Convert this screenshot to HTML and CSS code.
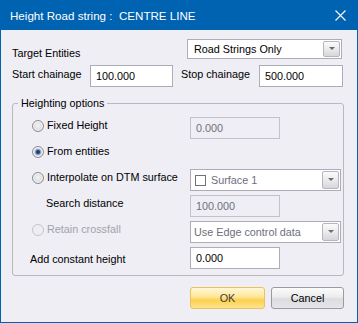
FILE: index.html
```html
<!DOCTYPE html>
<html lang="en">
<head>
  <meta charset="UTF-8" />
  <title>Height Road string</title>
  <link rel="stylesheet" href="styles.css">
</head>
<body>
  <div class="dialog">
    <div class="title-bar">
      <span class="title-text">Height Road string :&nbsp; CENTRE LINE</span>
      <svg class="close-icon" width="11" height="11" viewBox="0 0 11 11">
        <path d="M0.5 0.5 L10.5 10.5 M10.5 0.5 L0.5 10.5" stroke="#ffffff" stroke-width="1.1" fill="none" />
      </svg>
    </div>

    <div class="content">
      <div class="row row-target">
        <span class="label label-target">Target Entities</span>
        <div class="combo combo-target">
          <span class="combo-text">Road Strings Only</span>
          <span class="drop-btn"></span>
        </div>
      </div>

      <div class="row row-chainage">
        <span class="label label-start">Start chainage</span>
        <div class="input input-chain">100.000</div>
        <span class="label label-stop">Stop chainage</span>
        <div class="input input-chain input-stop">500.000</div>
      </div>

      <fieldset class="group">
        <legend>Heighting options</legend>

        <div class="opt-row first">
          <label class="opt-label"><span class="radio"></span>Fixed Height</label>
          <div class="input input-small disabled">0.000</div>
        </div>

        <div class="opt-row">
          <label class="opt-label"><span class="radio checked"></span>From entities</label>
        </div>

        <div class="opt-row">
          <label class="opt-label"><span class="radio"></span>Interpolate on DTM surface</label>
          <div class="combo combo-wide">
            <span class="check-box"></span>
            <span class="combo-text muted">Surface 1</span>
            <span class="drop-btn"></span>
          </div>
        </div>

        <div class="opt-row">
          <span class="opt-label indent">Search distance</span>
          <div class="input input-small disabled">100.000</div>
        </div>

        <div class="opt-row">
          <label class="opt-label greyed"><span class="radio off"></span>Retain crossfall</label>
          <div class="combo combo-wide">
            <span class="combo-text muted tight">Use Edge control data</span>
            <span class="drop-btn"></span>
          </div>
        </div>

        <div class="opt-row last">
          <span class="opt-label plain">Add constant height</span>
          <div class="input input-small">0.000</div>
        </div>
      </fieldset>

      <div class="buttons">
        <button class="btn btn-ok">OK</button>
        <button class="btn btn-cancel">Cancel</button>
      </div>
    </div>
  </div>
</body>
</html>
```

FILE: styles.css
```css
body {
  margin: 0;
  font-family: 'Liberation Sans', Arial, sans-serif;
  font-size: 10.8px;
  color: #000;
  background: #eeeef3;
}

.dialog {
  width: 358px;
  height: 323px;
  box-sizing: border-box;
  border: 1px solid #0063b1;
  border-top: none;
  background: #eeeef4;
}

.title-bar {
  height: 30px;
  margin: 0 -1px;
  padding: 0 12px 0 10px;
  background: #0063b1;
  display: flex;
  align-items: center;
  justify-content: space-between;
}

.title-text {
  color: #ffffff;
  font-size: 11.6px;
  line-height: 14px;
  padding-top: 1px;
}

.close-icon {
  margin-top: 1px;
}

.content {
  padding: 0 13px 0 11px;
}

/* top rows */
.row {
  display: flex;
  align-items: flex-start;
}

.row-target {
  margin-top: 9px;
  height: 20px;
}

.row-chainage {
  margin-top: 6px;
  height: 22px;
}

.label {
  line-height: 13px;
}

.label-target {
  width: 175px;
  padding-top: 8px;
}

.label-start {
  width: 78px;
  padding-top: 3px;
}

.label-stop {
  width: 78px;
  margin-left: 8px;
  padding-top: 3px;
}

.input {
  box-sizing: border-box;
  height: 22px;
  border: 1px solid #acadb8;
  background: #ffffff;
  padding: 0 5px;
  line-height: 20px;
}

.input-chain {
  width: 83px;
}

.input-stop {
  width: 84px;
}

.input-small {
  width: 90px;
}

.input.disabled {
  background: #eeeef4;
  border-color: #c2c2cc;
  color: #6e6e7c;
}

/* combo boxes */
.combo {
  box-sizing: border-box;
  display: flex;
  align-items: center;
  border: 1px solid #acadb8;
  background: #ffffff;
}

.combo-target {
  width: 155px;
  height: 20px;
}

.combo-wide {
  width: 151px;
  height: 22px;
}

.combo-text {
  flex: 1;
  padding-left: 6px;
  line-height: 14px;
  white-space: nowrap;
}

.combo-text.muted {
  color: #6e6e7c;
  padding-left: 5px;
}

.combo-text.tight {
  padding-left: 3px;
}

.drop-btn {
  box-sizing: border-box;
  width: 17px;
  align-self: stretch;
  margin: 1px 1px 1px 0;
  border: 1px solid #b6b6bd;
  border-radius: 2px;
  background: linear-gradient(#fbfbfb, #e9e9ec 55%, #d6d6db);
  display: flex;
  align-items: center;
  justify-content: center;
}

.drop-btn::after {
  content: '';
  border-left: 3px solid transparent;
  border-right: 3px solid transparent;
  border-top: 3px solid #6a6a70;
  margin-top: -1px;
}

.check-box {
  box-sizing: border-box;
  width: 11px;
  height: 11px;
  margin-left: 4px;
  border: 1px solid #707078;
  background: #ffffff;
}

/* group box */
.group {
  margin: 10px 0 0;
  padding: 0 0 6px;
  width: 332px;
  box-sizing: border-box;
  border: 1px solid #b8b8c0;
  border-radius: 3px;
  min-width: 0;
}

.group legend {
  margin-left: 5px;
  padding: 0 3px;
  line-height: 13px;
}

.opt-row {
  display: flex;
  align-items: flex-start;
  height: 22px;
  margin-bottom: 4px;
}

.opt-row.first {
  margin-top: 7px;
}

.opt-row.last {
  margin-bottom: 0;
}

.opt-label {
  width: 158px;
  padding-left: 19px;
  display: flex;
  align-items: center;
  line-height: 17px;
  white-space: nowrap;
}

.opt-label.indent {
  width: 144px;
  padding-left: 33px;
}

.opt-label.plain {
  width: 160px;
  padding-left: 17px;
  padding-top: 4px;
}

.opt-label.greyed {
  color: #a2a2aa;
}

.radio {
  box-sizing: border-box;
  width: 12px;
  height: 12px;
  margin-right: 3px;
  border-radius: 50%;
  border: 1px solid #8c8c94;
  background: radial-gradient(circle at 50% 45%, #f4f4f4 0, #e2e2e4 45%, #c9c9cd 100%);
  box-shadow: inset 0 0 0 1px #f8f8f8;
  display: flex;
  align-items: center;
  justify-content: center;
}

.radio.checked::after {
  content: '';
  width: 4px;
  height: 4px;
  border-radius: 50%;
  background: #1f3f78;
  box-shadow: 0 0 1px 1px #6d8fc4;
}

.radio.off {
  border-color: #c4c4ca;
  background: #eeeef2;
  box-shadow: none;
}

/* buttons */
.buttons {
  display: flex;
  justify-content: flex-end;
  gap: 6px;
  margin-top: 11px;
}

.btn {
  box-sizing: border-box;
  height: 22px;
  padding: 0;
  font-family: 'Liberation Sans', Arial, sans-serif;
  font-size: 10.8px;
  color: #000;
  border-radius: 3px;
}

.btn-ok {
  width: 75px;
  border: 1px solid #e5c365;
  background: linear-gradient(#fff7d6, #ffe596 45%, #fcd14f 60%, #fde38a);
  color: #3a3a3a;
}

.btn-cancel {
  width: 73px;
  border: 1px solid #9a9aa2;
  background: linear-gradient(#fbfbfb, #ececee 45%, #dcdce0 55%, #e6e6ea);
}
```
